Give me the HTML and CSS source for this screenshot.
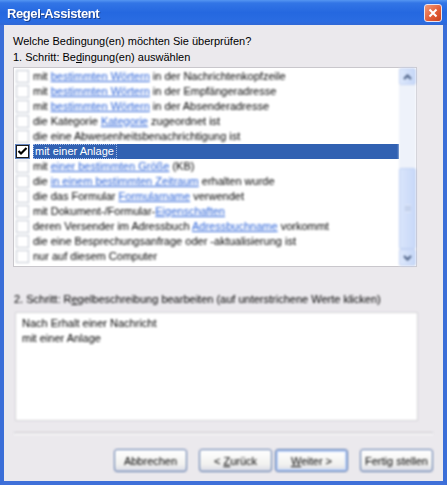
FILE: index.html
```html
<!DOCTYPE html>
<html lang="de">
<head>
    <meta charset="UTF-8">
    <title>Regel-Assistent</title>
    <link rel="stylesheet" href="styles.css">
</head>
<body>

    <div class="window">
        <div class="titlebar">
            <span class="title">Regel-Assistent</span>
            <span class="close-button">
                <svg width="10" height="10" viewBox="0 0 10 10"><path d="M1.5 1.5 L8.5 8.5 M8.5 1.5 L1.5 8.5" stroke="#fff" stroke-width="2"/></svg>
            </span>
        </div>

        <div class="client">
            <p class="line">Welche Bedingung(en) möchten Sie überprüfen?</p>
            <p class="line">1. Schritt: Be<u>d</u>ingung(en) auswählen</p>

            <div class="listbox">
                <ul class="rows">
                    <li class="row"><span class="check"></span><span class="label">mit <a>bestimmten Wörtern</a> in der Nachrichtenkopfzeile</span></li>
                    <li class="row"><span class="check"></span><span class="label">mit <a>bestimmten Wörtern</a> in der Empfängeradresse</span></li>
                    <li class="row"><span class="check"></span><span class="label">mit <a>bestimmten Wörtern</a> in der Absenderadresse</span></li>
                    <li class="row"><span class="check"></span><span class="label">die Kategorie <a>Kategorie</a> zugeordnet ist</span></li>
                    <li class="row"><span class="check"></span><span class="label">die eine Abwesenheitsbenachrichtigung ist</span></li>
                    <li class="row selected">
                        <span class="check checked">
                            <svg width="11" height="11" viewBox="0 0 11 11"><path d="M1.5 5 L4 7.5 L9.5 2" fill="none" stroke="#000" stroke-width="2.2"/></svg>
                        </span>
                        <span class="label"><span class="focus">mit einer Anlage</span></span>
                    </li>
                    <li class="row"><span class="check"></span><span class="label">mit <a>einer bestimmten Größe</a> (KB)</span></li>
                    <li class="row"><span class="check"></span><span class="label">die <a>in einem bestimmten Zeitraum</a> erhalten wurde</span></li>
                    <li class="row"><span class="check"></span><span class="label">die das Formular <a>Formularname</a> verwendet</span></li>
                    <li class="row"><span class="check"></span><span class="label">mit Dokument-/Formular-<a>Eigenschaften</a></span></li>
                    <li class="row"><span class="check"></span><span class="label">deren Versender im Adressbuch <a>Adressbuchname</a> vorkommt</span></li>
                    <li class="row"><span class="check"></span><span class="label">die eine Besprechungsanfrage oder -aktualisierung ist</span></li>
                    <li class="row"><span class="check"></span><span class="label">nur auf diesem Computer</span></li>
                </ul>
                <div class="scrollbar">
                    <div class="scroll-btn">
                        <svg width="9" height="6" viewBox="0 0 9 6"><path d="M1 5 L4.5 1.5 L8 5" fill="none" stroke="#4d6185" stroke-width="2"/></svg>
                    </div>
                    <div class="track">
                        <div class="thumb"><span class="grip"></span></div>
                    </div>
                    <div class="scroll-btn">
                        <svg width="9" height="6" viewBox="0 0 9 6"><path d="M1 1 L4.5 4.5 L8 1" fill="none" stroke="#4d6185" stroke-width="2"/></svg>
                    </div>
                </div>
            </div>

            <div class="lower">
                <p class="line">2. Schritt: R<u>e</u>gelbeschreibung bearbeiten (auf unterstrichene Werte klicken)</p>
                <div class="description">
                    Nach Erhalt einer Nachricht<br>
                    mit einer Anlage
                </div>
                <div class="separator"></div>
                <div class="buttons">
                    <button class="button">Abbrechen</button>
                    <button class="button gap-left">&lt; <u>Z</u>urück</button>
                    <button class="button default"><u>W</u>eiter &gt;</button>
                    <button class="button gap-left">Fertig stellen</button>
                </div>
            </div>
        </div>
    </div>

</body>
</html>
```

FILE: styles.css
```css
body {
    margin: 0;
    padding: 0;
    background: #ffffff;
    font-family: "Liberation Sans", Arial, sans-serif;
    font-size: 11px;
    color: #000;
}

.window {
    width: 447px;
    height: 485px;
    box-sizing: border-box;
    display: flex;
    flex-direction: column;
    background: #2f6ee0;
    border-left: 4px solid #3a6ed8;
    border-right: 4px solid #3a6ed8;
    border-bottom: 4px solid #3f70d9;
}

.titlebar {
    height: 26px;
    margin: 0 -4px;
    padding: 0 5px 0 7px;
    display: flex;
    align-items: center;
    justify-content: space-between;
    background: linear-gradient(#5596f2 0, #3275e6 12%, #2568e0 50%, #2a6ce2 85%, #3068d6 100%);
    filter: blur(0.4px);
}

.title {
    color: #fff;
    font-weight: bold;
    font-size: 13px;
    letter-spacing: -0.4px;
    text-shadow: 1px 1px 0 #1b3f8c;
    padding-top: 1px;
}

.close-button {
    width: 16px;
    height: 16px;
    border-radius: 3px;
    border: 1px solid #e9e4f0;
    background: linear-gradient(135deg, #f39a77, #e05a34 60%, #c8431f);
    display: flex;
    align-items: center;
    justify-content: center;
    filter: blur(0.7px);
}

.client {
    flex-grow: 1;
    background: #ebe9ed;
    padding: 8px 10px 9px 9px;
    display: flex;
    flex-direction: column;
}

.line {
    margin: 0;
    line-height: 16px;
    white-space: nowrap;
}

/* Liste mit Bedingungen */

.listbox {
    margin-top: 2px;
    width: 404px;
    height: 200px;
    box-sizing: border-box;
    border: 1px solid #c9c7cc;
    background: #fff;
    display: flex;
}

.rows {
    list-style: none;
    margin: 0;
    padding: 1px 0 0 0;
    flex-grow: 1;
}

.row {
    height: 15px;
    display: flex;
    align-items: center;
    filter: blur(1px);
}

.row.selected {
    filter: none;
}

.check {
    width: 11px;
    height: 11px;
    margin: 0 4px 0 2px;
    border: 1px solid #c3c9d3;
    background: #fff;
    flex-shrink: 0;
    display: flex;
    align-items: center;
    justify-content: center;
}

.check.checked {
    border: 1px solid #1c1c1c;
    outline: 1px solid #5c7fbf;
}

.label {
    white-space: nowrap;
    line-height: 15px;
    color: #000;
}

.label a {
    color: #2a62d8;
    text-decoration: underline;
}

.selected .label {
    flex-grow: 1;
    background: #3161b2;
    color: #fff;
    height: 15px;
}

.focus {
    display: inline-block;
    padding: 0 2px 0 1px;
    line-height: 13px;
    border: 1px dotted #9fb8e8;
}

.scrollbar {
    width: 17px;
    display: flex;
    flex-direction: column;
    background: #f4f3ee;
    filter: blur(1px);
}

.scroll-btn {
    height: 17px;
    box-sizing: border-box;
    border: 1px solid #c6d5f4;
    border-radius: 2px;
    background: linear-gradient(90deg, #dde8fc, #c6d7f7);
    display: flex;
    align-items: center;
    justify-content: center;
}

.track {
    flex-grow: 1;
    display: flex;
    flex-direction: column;
    justify-content: flex-end;
    background: #eef2fa;
}

.thumb {
    height: 81px;
    box-sizing: border-box;
    border: 1px solid #c1d2f3;
    border-radius: 2px;
    background: linear-gradient(90deg, #d9e5fb, #c8d8f8);
    display: flex;
    align-items: center;
    justify-content: center;
}

.grip {
    width: 6px;
    height: 7px;
    background: repeating-linear-gradient(#eef3fd 0, #eef3fd 1px, #9db3dd 1px, #9db3dd 2px);
}

/* Unterer Bereich */

.lower {
    display: flex;
    flex-direction: column;
    filter: blur(1px);
    color: #000;
}

.lower > .line {
    margin-top: 24px;
    padding-left: 1px;
}

.description {
    margin: 5px 0 0 2px;
    width: 403px;
    height: 109px;
    box-sizing: border-box;
    border: 1px solid #d3d1d6;
    background: #fff;
    padding: 3px 6px;
    line-height: 15px;
}

.separator {
    margin: 11px 0 0 1px;
    height: 1px;
    border-top: 1px solid #cfcdd2;
    border-bottom: 1px solid #fbfbfb;
}

.buttons {
    margin-top: 14px;
    display: flex;
    justify-content: flex-end;
}

.button {
    width: 73px;
    height: 23px;
    margin-left: 3px;
    padding: 0;
    font-family: "Liberation Sans", Arial, sans-serif;
    font-size: 11px;
    color: #000;
    border: 1px solid #5a76a8;
    border-radius: 3px;
    background: linear-gradient(#ffffff, #f1f1ef 70%, #d8dbe6);
    box-shadow: inset 0 -1px 0 #c9cfdf;
}

.button.gap-left {
    margin-left: 12px;
}

.button.default {
    box-shadow: inset 0 0 0 1px #9fbdf3, inset 0 0 0 2px #c6d8f8;
}
```
